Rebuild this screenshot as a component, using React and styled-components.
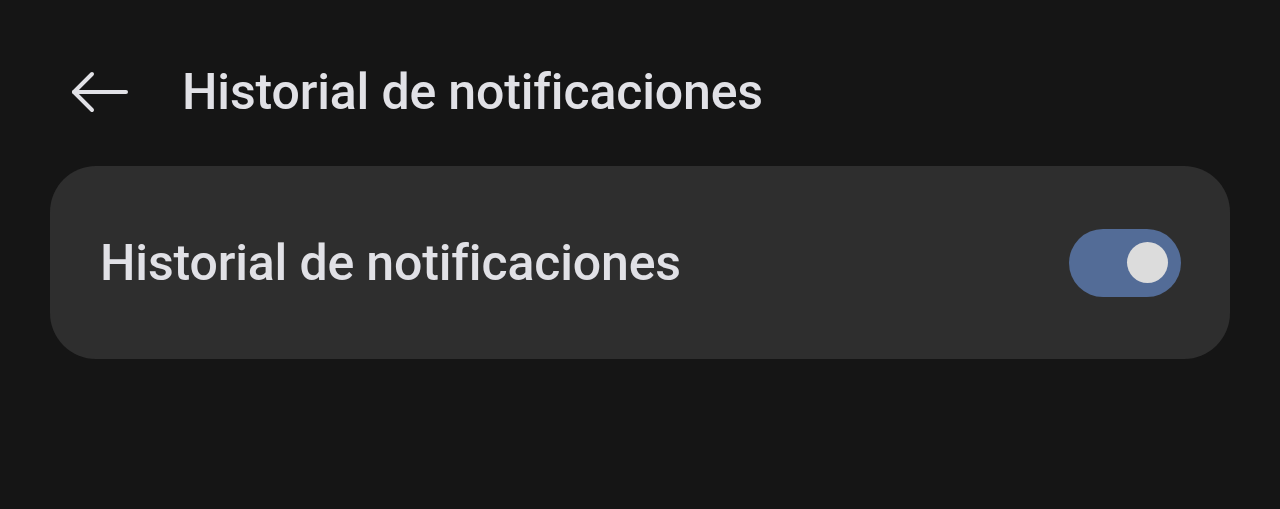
import React from 'react';
import styled, { createGlobalStyle } from 'styled-components';

const Global = createGlobalStyle`
html, body {
  margin: 0;
  background: #151515;
}
body {
  font-family: Roboto, "Liberation Sans", sans-serif;
  color: #e1e1e6;
}
`

const Page = styled.div`
width: 1280px;
height: 509px;
padding: 0 50px 0 50px;
box-sizing: border-box;
`

const TopBar = styled.header`
display: flex;
align-items: center;
height: 166px;
padding-left: 20px;
padding-top: 18px;
box-sizing: border-box;
`

const BackButton = styled.button`
display: flex;
align-items: center;
justify-content: center;
background: none;
border: 0;
padding: 0;
width: 58px;
height: 44px;
color: #e1e1e6;
margin-right: 54px;
`

const Title = styled.h1`
margin: 0;
font-size: 50px;
font-weight: 500;
letter-spacing: -0.15px;
`

const Card = styled.section`
display: flex;
align-items: center;
justify-content: space-between;
height: 193px;
background: #2e2e2e;
border-radius: 46px;
padding: 0 49px 0 50px;
box-sizing: border-box;
`

const Label = styled.span`
font-size: 50px;
font-weight: 500;
letter-spacing: -0.15px;
`

const Track = styled.div`
display: flex;
align-items: center;
justify-content: ${p => (p.$on ? 'flex-end' : 'flex-start')};
width: 112px;
height: 68px;
border-radius: 34px;
background: ${p => (p.$on ? '#536c97' : '#555')};
padding: 0 13px;
box-sizing: border-box;
`

const Thumb = styled.div`
width: 41px;
height: 41px;
border-radius: 50%;
background: #dcdcdc;
`

const App = () => (
  <>
    <Global />
    <Page>
      <TopBar>
        <BackButton aria-label="Atrás">
          <svg width="58" height="42" viewBox="0 0 58 42" fill="none" stroke="currentColor" strokeWidth="4" strokeLinecap="round" strokeLinejoin="round">
            <path d="M4 21 H56" />
            <path d="M22 3 L4 21 L22 39" />
          </svg>
        </BackButton>
        <Title>Historial de notificaciones</Title>
      </TopBar>
      <Card>
        <Label>Historial de notificaciones</Label>
        <Track $on>
          <Thumb />
        </Track>
      </Card>
    </Page>
  </>
);

export default App;
